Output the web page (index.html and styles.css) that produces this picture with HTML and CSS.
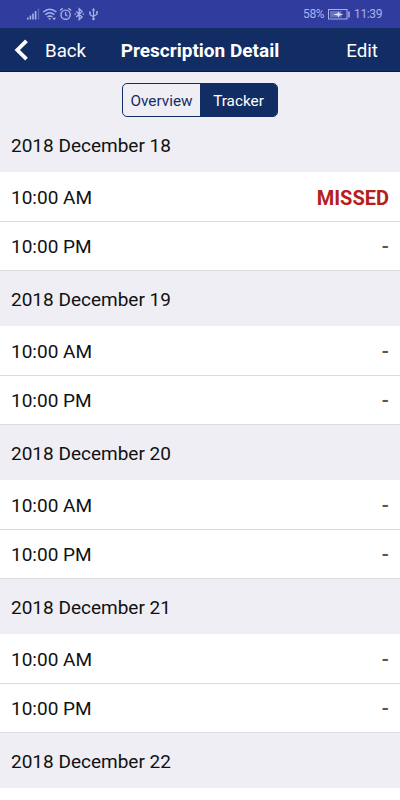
FILE: index.html
```html
<!DOCTYPE html>
<html lang="en">
<head>
<meta charset="UTF-8" />
<meta name="viewport" content="width=device-width, initial-scale=1" />
<title>Prescription Detail</title>
<link rel="stylesheet" href="styles.css">
</head>
<body>

<div class="status-bar">
  <svg class="status-icons" width="72" height="14" viewBox="0 0 72 14" fill="none" stroke="currentColor" aria-hidden="true">
    <!-- signal -->
    <path d="M.8 12.500v-2M3.400 12.500v-4M6 12.500v-6M8.600 12.500V4" stroke-width="1.600" />
    <path d="M11.500 12.500V1.500" stroke-width="1.300" opacity=".4" />
    <!-- wifi -->
    <path d="M16.200 5q6.600-5.600 13.200 0M18.300 7.600q4.500-3.700 9 0M20.400 9.900q2.400-1.900 4.800 0" stroke-width="1.500" />
    <circle cx="22.600" cy="11.700" r="1" fill="currentColor" stroke="none" />
    <path d="M25.200 10.800h3.800l-1.900 2.400z" fill="currentColor" stroke="none" />
    <!-- alarm -->
    <circle cx="38.600" cy="7.700" r="4.600" stroke-width="1.400" />
    <path d="M38.600 5v3l2 1.200M33 3.600l2.800-2.300M44.200 3.600l-2.800-2.300" stroke-width="1.300" />
    <!-- bluetooth -->
    <path d="M49.300 4.500l5.800 5.400-2.900 2.700V1.800l2.900 2.700-5.800 5.400M47.500 7.200h1.500M55.600 7.200h1.500" stroke-width="1.300" />
    <!-- usb -->
    <path d="M66.500 3v9M63 5.500v2.200l3.500 2M70 5.200v2l-3.500 2" stroke-width="1.200" />
    <path d="M66.500.8L64.900 3.500h3.200z" fill="currentColor" stroke="none" />
    <circle cx="66.500" cy="12" r="1.300" fill="currentColor" stroke="none" />
    <circle cx="63" cy="5.500" r="1" fill="currentColor" stroke="none" />
    <path d="M69.100 4.200h1.800V6h-1.800z" fill="currentColor" stroke="none" />
  </svg>
  <span class="percent">58%</span>
  <svg class="battery" width="23" height="11" viewBox="0 0 23 11" aria-hidden="true">
    <rect x=".5" y=".5" width="18.500" height="9.500" fill="none" stroke="currentColor" />
    <rect x="2" y="2" width="11.500" height="6.500" fill="currentColor" opacity=".45" />
    <path d="M5 5.500l4.500-1 .8-2 1.200 2 4 1-4 1-1.200 2-.8-2z" fill="#dce0ff" />
    <path d="M20.200 2.500h1.500v6h-1.500z" fill="currentColor" />
  </svg>
  <span class="clock">11:39</span>
</div>

<header class="nav-bar">
  <div class="back">
    <svg width="15" height="22" viewBox="0 0 15 22" aria-hidden="true">
      <path d="M12.500 1.800L3.300 11l9.200 9.200" fill="none" stroke="currentColor" stroke-width="3.800" />
    </svg>
    <span>Back</span>
  </div>
  <h1 class="nav-title">Prescription Detail</h1>
  <div class="edit">Edit</div>
</header>

<div class="tabs-area">
  <div class="tabs" role="tablist">
    <div class="tab" role="tab" aria-selected="false">Overview</div>
    <div class="tab active" role="tab" aria-selected="true">Tracker</div>
  </div>
</div>

<main class="tracker">
  <section class="day">
    <h2 class="date">2018 December 18</h2>
    <div class="dose"><span>10:00 AM</span><span class="status missed">MISSED</span></div>
    <div class="dose"><span>10:00 PM</span><span class="status">-</span></div>
  </section>
  <section class="day">
    <h2 class="date">2018 December 19</h2>
    <div class="dose"><span>10:00 AM</span><span class="status">-</span></div>
    <div class="dose"><span>10:00 PM</span><span class="status">-</span></div>
  </section>
  <section class="day">
    <h2 class="date">2018 December 20</h2>
    <div class="dose"><span>10:00 AM</span><span class="status">-</span></div>
    <div class="dose"><span>10:00 PM</span><span class="status">-</span></div>
  </section>
  <section class="day">
    <h2 class="date">2018 December 21</h2>
    <div class="dose"><span>10:00 AM</span><span class="status">-</span></div>
    <div class="dose"><span>10:00 PM</span><span class="status">-</span></div>
  </section>
  <section class="day">
    <h2 class="date">2018 December 22</h2>
  </section>
</main>

</body>
</html>
```
FILE: styles.css
```css
* {
  box-sizing: border-box;
}

body {
  margin: 0;
  height: 800px;
  overflow: hidden;
  font-family: Roboto, "Liberation Sans", sans-serif;
  font-size: 19px;
  color: #111;
  background: #fff;
}

.status-bar {
  display: flex;
  align-items: center;
  height: 28px;
  padding: 0 18px 0 27px;
  background: #303d9f;
  color: #a9b1e8;
  font-size: 12px;
  letter-spacing: -0.4px;
}

.percent {
  margin-left: auto;
}

.battery {
  margin: 0 3px 0 4px;
}

.nav-bar {
  display: grid;
  grid-template-columns: 1fr auto 1fr;
  align-items: center;
  height: 44px;
  padding: 0 14px;
  background: #122d64;
  border-bottom: 1px solid #061a4c;
  color: #fff;
  font-size: 18.7px;
}

.back {
  display: flex;
  align-items: center;
  gap: 16px;
}

.nav-title {
  margin: 0;
  padding-top: 2px;
  font-size: 19px;
  font-weight: 700;
}

.back span,
.edit {
  padding-top: 2px;
}

.edit {
  padding-right: 8px;
  text-align: right;
}

.tabs-area {
  display: flex;
  justify-content: center;
  height: 45px;
  padding-top: 11px;
  background: #efeef4;
}

.tabs {
  display: flex;
  width: 156px;
  height: 34px;
  border: 1px solid #122d64;
  border-radius: 5px;
  overflow: hidden;
  font-size: 15.3px;
}

.tab {
  flex: 1;
  display: flex;
  align-items: center;
  justify-content: center;
  padding-top: 1px;
  color: #122d64;
}

.tab.active {
  background: #122d64;
  color: #fff;
}

.date {
  display: flex;
  align-items: center;
  height: 55px;
  margin: 0;
  padding: 2px 11px 0;
  font-size: 19px;
  font-weight: 400;
  background: #efeef4;
}

.dose {
  display: flex;
  align-items: center;
  justify-content: space-between;
  height: 49px;
  padding: 1px 11px 0;
  border-bottom: 1px solid #dcdce0;
}

.date + .dose {
  height: 50px;
}

.status {
  font-weight: 700;
  color: #555;
}

.status.missed {
  padding-top: 1px;
  font-size: 20px;
  color: #b5201b;
}
```
